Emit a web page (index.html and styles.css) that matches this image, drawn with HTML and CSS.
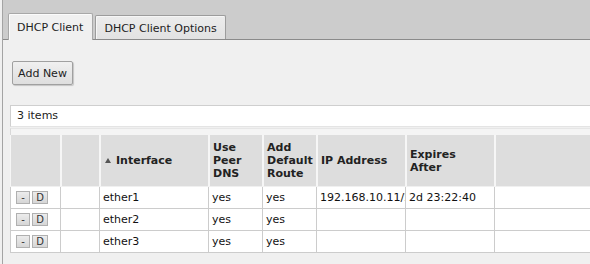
FILE: index.html
```html
<!DOCTYPE html>
<html>
<head>
<meta charset="utf-8">
<link rel="stylesheet" href="styles.css">
</head>
<body>
<div class="frame">
  <div class="tabbar">
    <div class="tab tab-active">DHCP Client</div>
    <div class="tab">DHCP Client Options</div>
  </div>
  <div class="content">
    <div class="toolbar">
      <button class="btn">Add New</button>
    </div>
    <div class="count">3 items</div>
    <div class="grid-wrap">
      <table class="grid">
        <colgroup>
          <col class="c1"><col class="c2"><col class="c3"><col class="c4"><col class="c5"><col class="c6"><col class="c7"><col class="c8">
        </colgroup>
        <thead>
          <tr>
            <th></th>
            <th></th>
            <th><span class="sort"></span>Interface</th>
            <th>Use<br>Peer<br>DNS</th>
            <th>Add<br>Default<br>Route</th>
            <th>IP Address</th>
            <th>Expires<br>After</th>
            <th></th>
          </tr>
        </thead>
        <tbody>
          <tr>
            <td><span class="mini">-</span><span class="mini mini-d">D</span></td>
            <td></td>
            <td>ether1</td>
            <td>yes</td>
            <td>yes</td>
            <td><span class="clip">192.168.10.11/24</span></td>
            <td>2d 23:22:40</td>
            <td></td>
          </tr>
          <tr>
            <td><span class="mini">-</span><span class="mini mini-d">D</span></td>
            <td></td>
            <td>ether2</td>
            <td>yes</td>
            <td>yes</td>
            <td></td>
            <td></td>
            <td></td>
          </tr>
          <tr>
            <td><span class="mini">-</span><span class="mini mini-d">D</span></td>
            <td></td>
            <td>ether3</td>
            <td>yes</td>
            <td>yes</td>
            <td></td>
            <td></td>
            <td></td>
          </tr>
        </tbody>
      </table>
    </div>
  </div>
</div>
</body>
</html>
```

FILE: styles.css
```css
html, body {
  margin: 0;
  padding: 0;
  background: #f0f0f0;
  overflow: hidden;
}
body {
  width: 590px;
  height: 264px;
  font-family: "DejaVu Sans", Verdana, sans-serif;
  font-size: 11px;
  color: #222;
}
.frame {
  margin-left: 2px;
  border-left: 1px solid #a4a4a4;
  height: 264px;
}
.tabbar {
  height: 39px;
  background: #cccccc;
  border-bottom: 1px solid #8a8a8a;
  display: flex;
  align-items: flex-end;
  padding-left: 5px;
  gap: 2px;
  box-sizing: content-box;
}
.tab {
  box-sizing: border-box;
  height: 24px;
  padding: 2px 8px 0 8px;
  border: 1px solid #9c9c9c;
  border-bottom: none;
  border-radius: 2px 2px 0 0;
  background: linear-gradient(#ececec, #e2e2e2);
  color: #222;
  font-size: 11px;
  display: flex;
  align-items: center;
  box-shadow: inset 1px 1px 0 #f6f6f6;
}
.tab-active {
  height: 27px;
  margin-bottom: -1px;
  padding: 0 9px 0 8px;
  background: #f0f0f0;
  border-color: #a8a8a8;
  box-shadow: inset 1px 1px 0 #fbfbfb;
  position: relative;
}
.content {
  padding: 21px 0 0 7px;
}
.toolbar {
  padding-left: 2px;
  height: 24px;
}
.btn {
  box-sizing: border-box;
  height: 24px;
  width: 61px;
  padding: 0;
  margin: 0;
  border: 1px solid #a0a0a0;
  border-radius: 2px;
  background: linear-gradient(#f0f0f0, #dedede);
  box-shadow: 1px 1px 1px rgba(0, 0, 0, 0.18);
  font-family: "DejaVu Sans", Verdana, sans-serif;
  font-size: 11px;
  color: #222;
}
.count {
  margin-top: 20px;
  box-sizing: border-box;
  height: 22px;
  width: 600px;
  background: #fff;
  border: 1px solid #cfcfcf;
  border-right: none;
  border-bottom-color: #e4e4e4;
  padding: 3px 0 0 6px;
  color: #222;
}
.grid-wrap {
  width: 600px;
  margin-top: 1px;
  padding-top: 6px;
  border-left: 1px solid #d8d8d8;
  border-top: 1px solid #e6e6e6;
  background: #f4f4f4;
}
.grid {
  border-collapse: separate;
  border-spacing: 0;
  table-layout: fixed;
  width: 600px;
  margin-left: -1px;
}
.c1 { width: 51px; }
.c2 { width: 39px; }
.c3 { width: 109px; }
.c4 { width: 54px; }
.c5 { width: 54px; }
.c6 { width: 89px; }
.c7 { width: 89px; }
.c8 { width: 115px; }
.grid th {
  height: 52px;
  box-sizing: border-box;
  background: #dddddd;
  border-left: 1px solid #f6f6f6;
  border-right: 1px solid #f6f6f6;
  border-bottom: 1px solid #f0f0f0;
  padding: 0 2px 0 3px;
  text-align: left;
  vertical-align: middle;
  font-weight: bold;
  line-height: 13px;
  color: #222;
  white-space: nowrap;
}
.sort {
  display: inline-block;
  width: 0;
  height: 0;
  border-left: 3px solid transparent;
  border-right: 3px solid transparent;
  border-bottom: 5px solid #555;
  margin: 0 5px 1px 1px;
  vertical-align: middle;
}
.grid td {
  height: 22px;
  box-sizing: border-box;
  background: #fff;
  border-right: 1px solid #cccccc;
  border-bottom: 1px solid #cccccc;
  padding: 0 2px 0 3px;
  vertical-align: middle;
  white-space: nowrap;
  overflow: hidden;
  text-overflow: clip;
  color: #111;
}
.grid td:first-child {
  border-left: 1px solid #cccccc;
  padding-left: 5px;
}
.clip {
  display: block;
  overflow: hidden;
  white-space: nowrap;
  margin-right: -2px;
}
.mini {
  display: inline-block;
  box-sizing: border-box;
  width: 14px;
  height: 13px;
  border: 1px solid #b0b0b0;
  background: linear-gradient(#ececec, #d6d6d6);
  font-size: 10px;
  line-height: 11px;
  text-align: center;
  color: #333;
  vertical-align: middle;
}
.mini-d {
  width: 16px;
  margin-left: 2px;
}
```
